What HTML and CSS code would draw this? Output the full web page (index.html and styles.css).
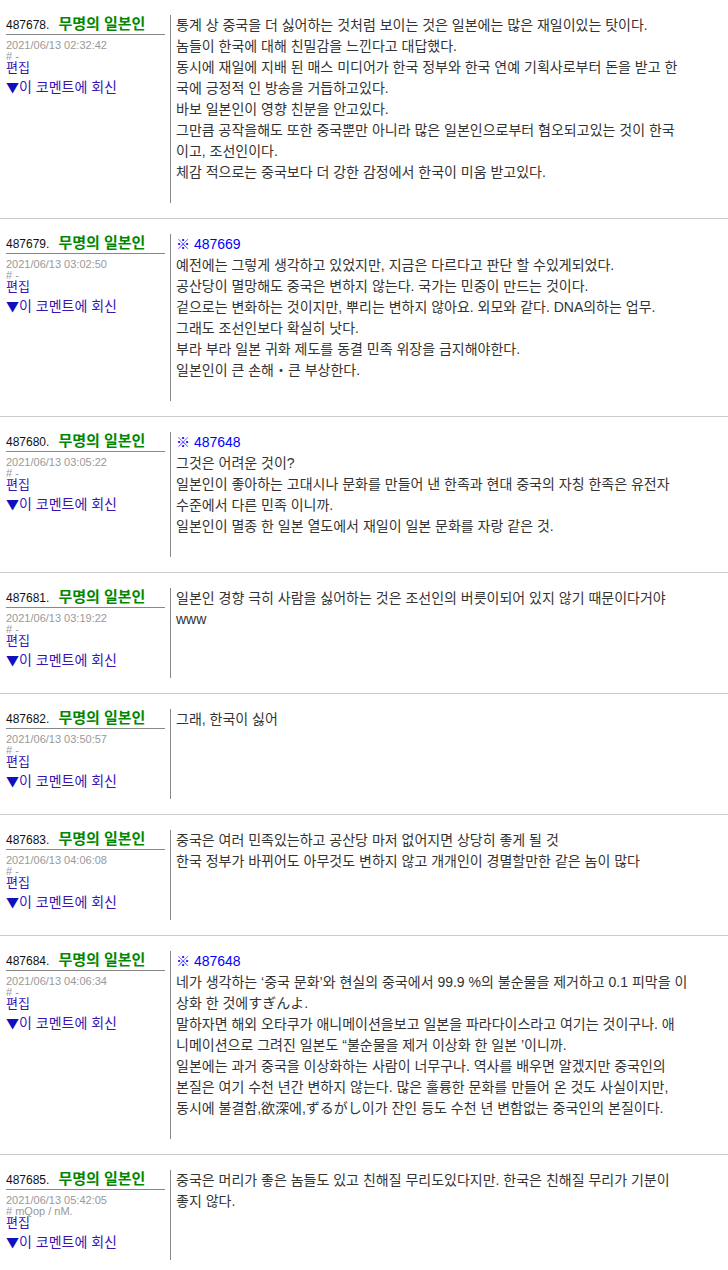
FILE: index.html
```html
<!DOCTYPE html>
<html lang="ko">
  <head>
    <meta charset="UTF-8" />
    <meta name="viewport" content="width=device-width, initial-scale=1.0" />
    <title>코멘트</title>
    <link rel="stylesheet" href="styles.css">
  </head>
  <body>
    <div class="thread">
      <div class="post">
        <div class="post-info">
          <div class="post-head"><span class="post-no">487678.</span><span class="post-name">무명의 일본인</span></div>
          <div class="post-date">2021/06/13 02:32:42</div>
          <div class="post-id"># -</div>
          <a href="#" class="post-link">편집</a>
          <a href="#" class="post-link post-reply"><span class="arrow">▼</span>이 코멘트에 회신</a>
        </div>
        <div class="post-body">
          통계 상 중국을 더 싫어하는 것처럼 보이는 것은 일본에는 많은 재일이있는 탓이다.<br>
          놈들이 한국에 대해 친밀감을 느낀다고 대답했다.<br>
          동시에 재일에 지배 된 매스 미디어가 한국 정부와 한국 연예 기획사로부터 돈을 받고 한<br>
          국에 긍정적 인 방송을 거듭하고있다.<br>
          바보 일본인이 영향 친분을 안고있다.<br>
          그만큼 공작을해도 또한 중국뿐만 아니라 많은 일본인으로부터 혐오되고있는 것이 한국<br>
          이고, 조선인이다.<br>
          체감 적으로는 중국보다 더 강한 감정에서 한국이 미움 받고있다.
        </div>
      </div>

      <div class="post">
        <div class="post-info">
          <div class="post-head"><span class="post-no">487679.</span><span class="post-name">무명의 일본인</span></div>
          <div class="post-date">2021/06/13 03:02:50</div>
          <div class="post-id"># -</div>
          <a href="#" class="post-link">편집</a>
          <a href="#" class="post-link post-reply"><span class="arrow">▼</span>이 코멘트에 회신</a>
        </div>
        <div class="post-body">
          <a href="#" class="anchor">※ 487669</a><br>
          예전에는 그렇게 생각하고 있었지만, 지금은 다르다고 판단 할 수있게되었다.<br>
          공산당이 멸망해도 중국은 변하지 않는다. 국가는 민중이 만드는 것이다.<br>
          겉으로는 변화하는 것이지만, 뿌리는 변하지 않아요. 외모와 같다. DNA의하는 업무.<br>
          그래도 조선인보다 확실히 낫다.<br>
          부라 부라 일본 귀화 제도를 동결 민족 위장을 금지해야한다.<br>
          일본인이 큰 손해・큰 부상한다.
        </div>
      </div>

      <div class="post">
        <div class="post-info">
          <div class="post-head"><span class="post-no">487680.</span><span class="post-name">무명의 일본인</span></div>
          <div class="post-date">2021/06/13 03:05:22</div>
          <div class="post-id"># -</div>
          <a href="#" class="post-link">편집</a>
          <a href="#" class="post-link post-reply"><span class="arrow">▼</span>이 코멘트에 회신</a>
        </div>
        <div class="post-body">
          <a href="#" class="anchor">※ 487648</a><br>
          그것은 어려운 것이?<br>
          일본인이 좋아하는 고대시나 문화를 만들어 낸 한족과 현대 중국의 자칭 한족은 유전자<br>
          수준에서 다른 민족 이니까.<br>
          일본인이 멸종 한 일본 열도에서 재일이 일본 문화를 자랑 같은 것.
        </div>
      </div>

      <div class="post">
        <div class="post-info">
          <div class="post-head"><span class="post-no">487681.</span><span class="post-name">무명의 일본인</span></div>
          <div class="post-date">2021/06/13 03:19:22</div>
          <div class="post-id"># -</div>
          <a href="#" class="post-link">편집</a>
          <a href="#" class="post-link post-reply"><span class="arrow">▼</span>이 코멘트에 회신</a>
        </div>
        <div class="post-body">
          일본인 경향 극히 사람을 싫어하는 것은 조선인의 버릇이되어 있지 않기 때문이다거야<br>
          www
        </div>
      </div>

      <div class="post">
        <div class="post-info">
          <div class="post-head"><span class="post-no">487682.</span><span class="post-name">무명의 일본인</span></div>
          <div class="post-date">2021/06/13 03:50:57</div>
          <div class="post-id"># -</div>
          <a href="#" class="post-link">편집</a>
          <a href="#" class="post-link post-reply"><span class="arrow">▼</span>이 코멘트에 회신</a>
        </div>
        <div class="post-body">
          그래, 한국이 싫어
        </div>
      </div>

      <div class="post">
        <div class="post-info">
          <div class="post-head"><span class="post-no">487683.</span><span class="post-name">무명의 일본인</span></div>
          <div class="post-date">2021/06/13 04:06:08</div>
          <div class="post-id"># -</div>
          <a href="#" class="post-link">편집</a>
          <a href="#" class="post-link post-reply"><span class="arrow">▼</span>이 코멘트에 회신</a>
        </div>
        <div class="post-body">
          중국은 여러 민족있는하고 공산당 마저 없어지면 상당히 좋게 될 것<br>
          한국 정부가 바뀌어도 아무것도 변하지 않고 개개인이 경멸할만한 같은 놈이 많다
        </div>
      </div>

      <div class="post">
        <div class="post-info">
          <div class="post-head"><span class="post-no">487684.</span><span class="post-name">무명의 일본인</span></div>
          <div class="post-date">2021/06/13 04:06:34</div>
          <div class="post-id"># -</div>
          <a href="#" class="post-link">편집</a>
          <a href="#" class="post-link post-reply"><span class="arrow">▼</span>이 코멘트에 회신</a>
        </div>
        <div class="post-body">
          <a href="#" class="anchor">※ 487648</a><br>
          네가 생각하는 ‘중국 문화’와 현실의 중국에서 99.9 %의 불순물을 제거하고 0.1 피막을 이<br>
          상화 한 것에すぎんよ.<br>
          말하자면 해외 오타쿠가 애니메이션을보고 일본을 파라다이스라고 여기는 것이구나. 애<br>
          니메이션으로 그려진 일본도 “불순물을 제거 이상화 한 일본 ’이니까.<br>
          일본에는 과거 중국을 이상화하는 사람이 너무구나. 역사를 배우면 알겠지만 중국인의<br>
          본질은 여기 수천 년간 변하지 않는다. 많은 훌륭한 문화를 만들어 온 것도 사실이지만,<br>
          동시에 불결함,欲深에,ずるがし이가 잔인 등도 수천 년 변함없는 중국인의 본질이다.
        </div>
      </div>

      <div class="post">
        <div class="post-info">
          <div class="post-head"><span class="post-no">487685.</span><span class="post-name">무명의 일본인</span></div>
          <div class="post-date">2021/06/13 05:42:05</div>
          <div class="post-id"># mQop / nM.</div>
          <a href="#" class="post-link">편집</a>
          <a href="#" class="post-link post-reply"><span class="arrow">▼</span>이 코멘트에 회신</a>
        </div>
        <div class="post-body">
          중국은 머리가 좋은 놈들도 있고 친해질 무리도있다지만. 한국은 친해질 무리가 기분이<br>
          좋지 않다.
        </div>
      </div>
    </div>
  </body>
</html>
```

FILE: styles.css
```css
body {
  margin: 0;
  background-color: white;
  font-family: "Liberation Sans", "Noto Sans CJK KR", sans-serif;
  color: #333;
}
.post {
  display: flex;
  padding: 15px 0;
  border-bottom: 1px solid #ccc;
}
.post-info {
  width: 159px;
  margin-left: 6px;
  margin-right: 5px;
  padding-bottom: 8px;
  display: flex;
  flex-direction: column;
  align-items: flex-start;
}
.post-head {
  align-self: stretch;
  line-height: 18px;
  border-bottom: 1px solid #888;
  white-space: nowrap;
}
.post-no {
  font-size: 12px;
  color: #111;
  margin-right: 9px;
}
.post-name {
  font-size: 15px;
  font-weight: bold;
  color: #080;
}
.post-date {
  margin-top: 5px;
  font-size: 11px;
  line-height: 11px;
  color: #999;
}
.post-id {
  font-size: 11px;
  line-height: 11px;
  color: #999;
}
.post-link {
  font-size: 13px;
  line-height: 11px;
  color: #3a13b0;
  text-decoration: none;
}
.post-reply {
  margin-top: 4px;
  font-size: 14px;
  line-height: 19px;
}
.arrow {
  font-family: "Noto Sans CJK KR", sans-serif;
  font-size: 13px;
  color: #1010c0;
}
.post-body {
  flex: 1;
  border-left: 1px solid #888;
  padding: 0 0 20px 5px;
  font-size: 14px;
  line-height: 21px;
  white-space: nowrap;
}
.anchor {
  color: #00f;
  text-decoration: none;
}
```
